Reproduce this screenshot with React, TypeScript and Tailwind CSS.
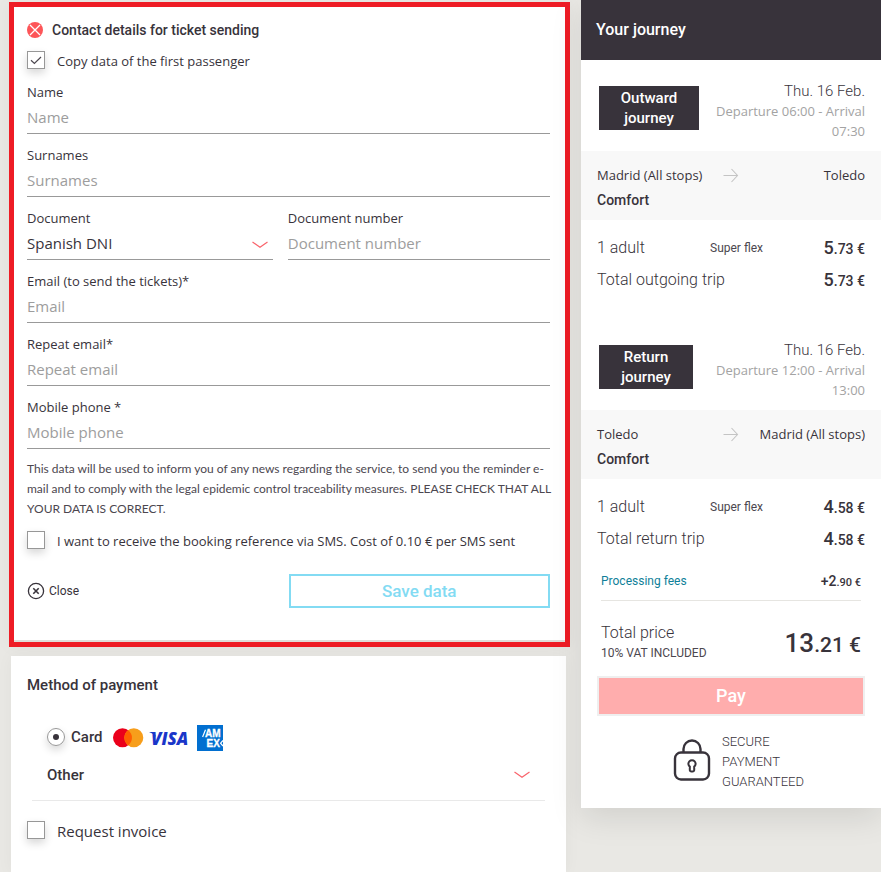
import { useState } from 'react'

interface FieldProps {
  id: string
  label: string
  placeholder: string
  type?: string
}

interface Trip {
  id: string
  tag: string
  tagWidth: string
  date: string
  times: string
  from: string
  to: string
  fare: string
  totalLabel: string
  units: string
  cents: string
}

const trips: Trip[] = [
  {
    id: 'outward',
    tag: 'Outward journey',
    tagWidth: 'w-[100px]',
    date: 'Thu. 16 Feb.',
    times: 'Departure 06:00 - Arrival 07:30',
    from: 'Madrid (All stops)',
    to: 'Toledo',
    fare: 'Comfort',
    totalLabel: 'Total outgoing trip',
    units: '5',
    cents: '.73 €'
  },
  {
    id: 'return',
    tag: 'Return journey',
    tagWidth: 'w-[94px]',
    date: 'Thu. 16 Feb.',
    times: 'Departure 12:00 - Arrival 13:00',
    from: 'Toledo',
    to: 'Madrid (All stops)',
    fare: 'Comfort',
    totalLabel: 'Total return trip',
    units: '4',
    cents: '.58 €'
  }
]

function Chevron() {
  return (
    <svg className="w-4 h-2 shrink-0" viewBox="0 0 16 8" fill="none" stroke="#f9636b" strokeWidth="1.2">
      <path d="M0.5 1 L8 6.2 L15.5 1" />
    </svg>
  )
}

function Field({ id, label, placeholder, type = 'text' }: FieldProps) {
  return (
    <div className="flex-1 min-w-0">
      <label htmlFor={id} className="block text-[13px] leading-5">{label}</label>
      <input
        id={id}
        type={type}
        placeholder={placeholder}
        className="block w-full h-8 pb-0.5 bg-transparent border-b border-[#999] text-[15px] outline-none placeholder:text-[#9d9d9d]"
      />
    </div>
  )
}

interface CheckProps {
  id: string
  label: string
  large?: boolean
  defaultChecked?: boolean
}

function Check({ id, label, large, defaultChecked }: CheckProps) {
  return (
    <div className="flex items-start">
      <span className="relative w-[18px] h-[18px] shrink-0">
        <input
          id={id}
          type="checkbox"
          defaultChecked={defaultChecked}
          className="peer block appearance-none w-[18px] h-[18px] bg-white border border-[#979797] shadow-[0_4px_8px_rgba(0,0,0,0.16)]"
        />
        <svg
          className="absolute inset-0 hidden peer-checked:block pointer-events-none"
          viewBox="0 0 18 18"
          fill="none"
          stroke="#4c474f"
          strokeWidth="1.2"
        >
          <path d="M4 9.2 L7.4 12.4 L14 6" />
        </svg>
      </span>
      <label htmlFor={id} className={`ml-3 leading-5 ${large ? 'text-[15px]' : 'text-[13px]'}`}>{label}</label>
    </div>
  )
}

function ContactForm() {
  return (
    <form
      className="bg-white border-5 border-[#ee1c25] shadow-[0_0_16px_rgba(0,0,0,0.04)]"
      onSubmit={e => e.preventDefault()}
    >
      <div className="pt-[11px] pl-[13px] pr-[15px] pb-8 border-b-2 border-[#dfddd9]">
        <div className="flex items-center h-6 gap-[9px]">
          <svg className="w-4 h-4 shrink-0" viewBox="0 0 16 16" fill="none">
            <circle cx="8" cy="8" r="8" fill="#fd5558" />
            <path d="M3 3 L13 13 M13 3 L3 13" stroke="#fff" strokeWidth="1.3" />
          </svg>
          <h2 className="font-[Roboto] text-sm font-medium">Contact details for ticket sending</h2>
        </div>
        <div className="mt-[9px]">
          <Check id="copy" label="Copy data of the first passenger" defaultChecked />
        </div>

        <div className="mt-[11px] flex flex-col gap-[11px]">
          <Field id="name" label="Name" placeholder="Name" />
          <Field id="surnames" label="Surnames" placeholder="Surnames" />
          <div className="flex gap-[15px]">
            <div className="w-[47%]">
              <label htmlFor="document" className="block text-[13px] leading-5">Document</label>
              <div className="relative">
                <select
                  id="document"
                  className="block w-full h-8 appearance-none bg-transparent border-b border-[#999] text-[15px] outline-none"
                >
                  <option>Spanish DNI</option>
                  <option>Passport</option>
                </select>
                <span className="absolute right-[5px] top-[13px] pointer-events-none">
                  <Chevron />
                </span>
              </div>
            </div>
            <Field id="document-number" label="Document number" placeholder="Document number" />
          </div>
          <Field id="email" type="email" label="Email (to send the tickets)*" placeholder="Email" />
          <Field id="repeat-email" type="email" label="Repeat email*" placeholder="Repeat email" />
          <Field id="phone" type="tel" label="Mobile phone *" placeholder="Mobile phone" />
        </div>

        <p className="mt-2.5 -mr-2 font-[Lato] text-xs leading-5 text-[#4c474f]">
          This data will be used to inform you of any news regarding the service, to send you the reminder
          e-mail and to comply with the legal epidemic control traceability measures. PLEASE CHECK THAT ALL
          YOUR DATA IS CORRECT.
        </p>
        <div className="mt-3">
          <Check id="sms" label="I want to receive the booking reference via SMS. Cost of 0.10 € per SMS sent" />
        </div>

        <div className="mt-[23px] flex items-center justify-between">
          <button type="button" className="flex items-center gap-1 font-[Roboto] text-xs leading-5">
            <svg className="w-[18px] h-[18px]" viewBox="0 0 18 18" fill="none" stroke="#38333b">
              <circle cx="9" cy="9" r="7.6" strokeWidth="1.3" />
              <path d="M6.3 6.3 L11.7 11.7 M11.7 6.3 L6.3 11.7" strokeWidth="1.6" />
            </svg>
            Close
          </button>
          <button
            type="submit"
            className="w-1/2 h-[34px] border-2 border-[#83dbf3] font-[Roboto] text-[17px] leading-5 font-medium text-[#83dbf3]"
          >
            Save data
          </button>
        </div>
      </div>
    </form>
  )
}

function CardLogos() {
  return (
    <svg className="w-[110px] h-[26px] ml-2.5 mt-0.5" viewBox="0 0 110 26">
      <circle cx="9.5" cy="12.8" r="9.5" fill="#eb001b" />
      <circle cx="20.8" cy="12.8" r="9.5" fill="#f79e1b" />
      <path d="M15.15 5.2 A9.5 9.5 0 0 1 15.15 20.4 A9.5 9.5 0 0 1 15.15 5.2 Z" fill="#ff5f00" />
      <path d="M36 7 H41.4 L43 12 Q40 8 36 7 Z" fill="#1a36c9" />
      <text x="38" y="19.5" fontFamily="Open Sans" fontSize="17" fontWeight="800" fontStyle="italic" fill="#1a36c9">VISA</text>
      <rect x="84" width="26" height="26" fill="#016fd0" />
      <g fill="#fff" stroke="#fff" strokeWidth="0.3" fontFamily="Liberation Sans" fontSize="10" fontWeight="700">
        <text x="92" y="12">AM</text>
        <text x="93.5" y="22">EX</text>
      </g>
      <path d="M92.5 4.8 L89.6 12" stroke="#fff" strokeWidth="1.2" />
      <path d="M110 15.5 L107.6 18.2 L110 21" fill="none" stroke="#fff" strokeWidth="1.2" />
    </svg>
  )
}

function PaymentMethod() {
  const [otherOpen, setOtherOpen] = useState(false)

  return (
    <section className="mt-[9px] ml-0.5 mr-1 grow bg-white pt-[19px] px-4 pb-8 shadow-[0_0_16px_rgba(0,0,0,0.04)]">
      <h2 className="font-[Roboto] text-[15px] leading-5 font-medium">Method of payment</h2>
      <div className="mt-[29px] ml-5 flex items-center h-[26px]">
        <input
          id="card"
          type="radio"
          name="payment"
          defaultChecked
          className="flex items-center justify-center appearance-none w-[18px] h-[18px] rounded-full border border-[#979797] shadow-[0_4px_8px_rgba(0,0,0,0.16)] checked:before:block checked:before:w-1.5 checked:before:h-1.5 checked:before:rounded-full checked:before:bg-[#38333b]"
        />
        <label htmlFor="card" className="flex items-center ml-1.5 font-[Roboto] text-[15px] font-medium">
          Card
          <CardLogos />
        </label>
      </div>
      <div className="mx-[5px] mt-[15px] px-[15px] pb-[15px] border-b border-[#e9e9e9]">
        <button
          type="button"
          aria-expanded={otherOpen}
          onClick={() => setOtherOpen(!otherOpen)}
          className="w-full flex items-center justify-between font-[Roboto] text-[15px] leading-5 font-medium"
        >
          Other
          <Chevron />
        </button>
      </div>
      <div className="mt-5">
        <Check id="invoice" label="Request invoice" large />
      </div>
    </section>
  )
}

function Price({ units, cents }: { units: string; cents: string }) {
  return (
    <span className="text-right text-lg leading-6 font-medium">
      {units}<span className="text-sm leading-none">{cents}</span>
    </span>
  )
}

function TripSummary({ trip }: { trip: Trip }) {
  return (
    <article>
      <div className="flex items-start justify-between pt-[21px] pb-2.5 pl-[18px] pr-4">
        <h3 className={`mt-[5px] px-4 py-0.5 bg-[#38333b] text-white text-center font-[Roboto] text-[15px] leading-5 font-medium ${trip.tagWidth}`}>
          {trip.tag}
        </h3>
        <div className="w-40 text-right">
          <p className="font-[Roboto] font-light text-[15px] leading-5">{trip.date}</p>
          <p className="text-[13px] leading-5 text-[#a3a3a3]">{trip.times}</p>
        </div>
      </div>
      <div className="bg-[#f8f8f8] px-4 pt-3.5 pb-2.5">
        <div className="grid grid-cols-[1fr_16px_1fr] items-center text-[13px] leading-5">
          <span>{trip.from}</span>
          <svg className="w-4 h-4" viewBox="0 0 16 16" fill="none" stroke="#c4c4c4" strokeWidth="1.1">
            <path d="M0.5 8.5 H14.5 M8.5 2 L14.5 8.5 L8.5 15" />
          </svg>
          <span className="text-right">{trip.to}</span>
        </div>
        <p className="mt-[5px] font-[Roboto] text-sm leading-5 font-medium">{trip.fare}</p>
      </div>
      <div className="px-4 pt-4 flex flex-col gap-2 font-[Roboto] leading-6">
        <div className="h-6 grid grid-cols-[113px_auto_1fr]">
          <span className="font-light">1 adult</span>
          <span className="text-xs leading-6 text-[#4c474f]">Super flex</span>
          <Price units={trip.units} cents={trip.cents} />
        </div>
        <div className="h-6 flex justify-between">
          <span className="font-light">{trip.totalLabel}</span>
          <Price units={trip.units} cents={trip.cents} />
        </div>
      </div>
    </article>
  )
}

function JourneySummary() {
  return (
    <aside className="w-[300px] shrink-0 self-start bg-white shadow-[0_10px_30px_rgba(0,0,0,0.1)]">
      <h2 className="h-[60px] flex items-center px-[15px] bg-[#38333b] text-white font-[Roboto] text-base font-medium">
        Your journey
      </h2>
      <div className="flex flex-col gap-[27px]">
        {trips.map(trip => (
          <TripSummary key={trip.id} trip={trip} />
        ))}
      </div>

      <div className="px-5 pt-5 font-[Roboto]">
        <div className="flex justify-between h-[30px] border-b border-[#e6e5e1]">
          <a href="#fees" className="text-xs leading-5 text-[#0f7f99]">Processing fees</a>
          <span className="text-sm leading-5 font-medium">+2<span className="text-[11px] leading-none">.90 €</span></span>
        </div>
        <div className="flex items-center justify-between h-[62px] pt-[22px]">
          <div>
            <p className="font-light text-base leading-5">Total price</p>
            <p className="text-xs leading-5 text-[#4c474f]">10% VAT INCLUDED</p>
          </div>
          <span className="text-[26px] leading-10 font-medium">13<span className="text-[21px] leading-none">.21 €</span></span>
        </div>
      </div>
      <div className="px-4 pt-[13px]">
        <button
          type="button"
          className="w-full h-10 border-2 border-[#efefef] bg-[#ffadad] text-white font-[Roboto] text-lg leading-5 font-medium"
        >
          Pay
        </button>
      </div>
      <div className="flex items-center pt-4 pb-4 pl-[92px] gap-[11px]">
        <svg className="w-[38px] h-[46px]" viewBox="0 0 38 46" fill="none" stroke="#38333b" strokeWidth="2.4">
          <path d="M10.5 13.5 V10 A8.5 8.5 0 0 1 27.5 10 V13.5" />
          <rect x="2" y="13.5" width="34" height="27" rx="6" />
          <path d="M16.8 27.6 A3.6 3.6 0 1 1 21.2 27.6 V31 A1.6 1.6 0 0 1 19.6 32.6 H18.4 A1.6 1.6 0 0 1 16.8 31 Z" strokeWidth="2" />
        </svg>
        <p className="w-[90px] font-[Roboto] font-light text-[13px] leading-5">SECURE PAYMENT GUARANTEED</p>
      </div>
    </aside>
  )
}

export default function App() {
  return (
    <div className="min-h-screen flex gap-[11px] pl-[9px] bg-[#e9e8e4] text-[#38333b] font-['Open_Sans',sans-serif]">
      <main className="flex-1 min-w-0 flex flex-col pt-0.5">
        <ContactForm />
        <PaymentMethod />
      </main>
      <JourneySummary />
    </div>
  )
}
